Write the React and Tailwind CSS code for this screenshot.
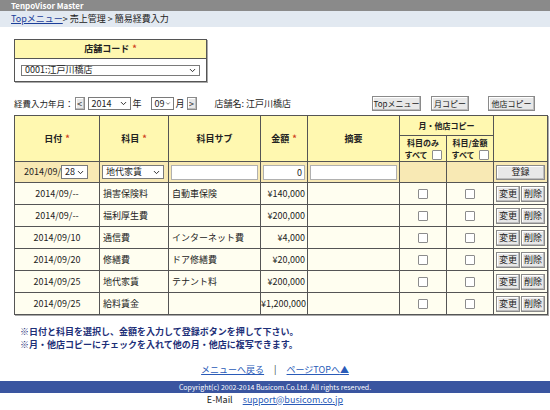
import { ChevronDown } from "lucide-react";

const rows = [
  ["2014/09/--", "損害保険料", "自動車保険", "¥140,000"],
  ["2014/09/--", "福利厚生費", "", "¥200,000"],
  ["2014/09/10", "通信費", "インターネット費", "¥4,000"],
  ["2014/09/20", "修繕費", "ドア修繕費", "¥20,000"],
  ["2014/09/25", "地代家賃", "テナント料", "¥200,000"],
  ["2014/09/25", "給料賃金", "", "¥1,200,000"],
];

function Select({ value, className }) {
  return (
    <div className={`flex items-center justify-between border border-[#7a7a7a] bg-white pl-[3px] pr-[2px] ${className}`}>
      <span>{value}</span>
      <ChevronDown size={9} strokeWidth={2.5} />
    </div>
  );
}

function Btn({ children, className }) {
  return (
    <div className={`flex items-center justify-center whitespace-nowrap border border-[#8a8a8a] bg-[#e8e8e8] shadow-[inset_-1px_-1px_0_#bdbdbd,inset_1px_1px_0_#fff] ${className}`}>
      {children}
    </div>
  );
}

function Check() {
  return <span className="inline-block w-[10px] h-[10px] border border-[#8c8c8c] bg-white rounded-[1px] align-middle" />;
}

const Req = () => <span className="text-[#d0401c] ml-[3px]">*</span>;

export default function App() {
  return (
    <div
      className="w-[550px] h-[410px] bg-white overflow-hidden text-[9px] text-[#222] whitespace-nowrap"
      style={{ fontFamily: '"Noto Sans CJK JP", "Noto Sans", sans-serif' }}
    >
      <div className="h-[11px] bg-[#8a8a8a] text-white text-[8px] leading-[11px] pl-[11px] font-bold">
        TenpoVisor Master
      </div>
      <div className="h-[16px] bg-[#e2e9f1] leading-[16px] pl-[11px]">
        <span className="text-[#1c3f9a] underline">Topメニュー</span>
        <span>&gt; 売上管理 &gt; 簡易経費入力</span>
      </div>

      {/* store code */}
      <div className="ml-[14px] mt-[12px] w-[193px] border border-[#555] shadow-[1px_1px_0_#aaa]">
        <div className="h-[19px] bg-[#fff8b0] border-b border-[#555] flex items-center justify-center font-bold">
          店舗コード<Req />
        </div>
        <div className="h-[22px] flex items-center px-[6px]">
          <Select value="0001:江戸川橋店" className="w-full h-[11px]" />
        </div>
      </div>

      {/* month row */}
      <div className="mt-[14px] h-[15px] flex items-center">
        <span className="ml-[14px] text-[8.5px]">経費入力年月：</span>
        <Btn className="ml-[1px] w-[10px] h-[13px]">&lt;</Btn>
        <Select value="2014" className="ml-[3px] w-[43px] h-[13px]" />
        <span className="ml-[2px]">年</span>
        <Select value="09" className="ml-[9px] w-[23px] h-[13px]" />
        <span className="ml-[2px]">月</span>
        <Btn className="ml-[2px] w-[10px] h-[13px]">&gt;</Btn>
        <span className="ml-[18px]">店舗名: 江戸川橋店</span>
        <Btn className="ml-auto w-[49px] h-[15px] text-[8px]">Topメニュー</Btn>
        <Btn className="ml-[10px] w-[38px] h-[15px] text-[8px]">月コピー</Btn>
        <Btn className="ml-[19px] w-[47px] h-[15px] mr-[15px] text-[8px]">他店コピー</Btn>
      </div>

      {/* table */}
      <table className="ml-[14px] mt-[4px] table-fixed border-collapse w-[533px] shadow-[1px_1px_0_#aaa]">
        <colgroup>
          <col className="w-[85px]" />
          <col className="w-[69px]" />
          <col className="w-[92px]" />
          <col className="w-[47px]" />
          <col className="w-[92px]" />
          <col className="w-[47px]" />
          <col className="w-[47px]" />
          <col className="w-[54px]" />
        </colgroup>
        <thead>
          <tr className="h-[20px] bg-[#fff8b0] font-bold">
            <th rowSpan={2} className="border border-[#555]">日付<Req /></th>
            <th rowSpan={2} className="border border-[#555]">科目<Req /></th>
            <th rowSpan={2} className="border border-[#555]">科目サブ</th>
            <th rowSpan={2} className="border border-[#555]">金額<Req /></th>
            <th rowSpan={2} className="border border-[#555]">摘要</th>
            <th colSpan={2} className="border border-[#555] text-[8px]">月・他店コピー</th>
            <th rowSpan={2} className="border border-[#555]"></th>
          </tr>
          <tr className="h-[26px] bg-[#fff8b0] font-bold text-[8px]">
            <th className="border border-[#555] leading-[12px]">
              <div>科目のみ</div>
              <div className="flex items-center justify-center gap-[4px]">すべて<Check /></div>
            </th>
            <th className="border border-[#555] leading-[12px]">
              <div>科目/金額</div>
              <div className="flex items-center justify-center gap-[4px]">すべて<Check /></div>
            </th>
          </tr>
        </thead>
        <tbody>
          <tr className="h-[21px] bg-[#f8e9b4]">
            <td className="border border-[#555]">
              <div className="flex items-center justify-end pr-[11px]">
                <span>2014/09/</span>
                <Select value="28" className="w-[27px] h-[14px]" />
              </div>
            </td>
            <td className="border border-[#555] px-[2px]">
              <Select value="地代家賃" className="w-[62px] h-[14px]" />
            </td>
            <td className="border border-[#555] px-[2px]">
              <div className="h-[15px] border border-[#b0b0b0] bg-white" />
            </td>
            <td className="border border-[#555] px-[2px]">
              <div className="h-[15px] border border-[#b0b0b0] bg-white text-right pr-[2px] leading-[13px]">0</div>
            </td>
            <td className="border border-[#555] px-[2px]">
              <div className="h-[15px] border border-[#b0b0b0] bg-white" />
            </td>
            <td className="border border-[#555]"></td>
            <td className="border border-[#555]"></td>
            <td className="border border-[#555] px-[2px]">
              <Btn className="h-[15px] w-full">登録</Btn>
            </td>
          </tr>
          {rows.map((r, i) => (
            <tr key={i} className="h-[22px] bg-[#fffef0]">
              <td className="border border-[#555] text-center">{r[0]}</td>
              <td className="border border-[#555] pl-[3px]">{r[1]}</td>
              <td className="border border-[#555] pl-[3px]">{r[2]}</td>
              <td className="border border-[#555] text-right pr-[2px]">{r[3]}</td>
              <td className="border border-[#555]"></td>
              <td className="border border-[#555] text-center"><Check /></td>
              <td className="border border-[#555] text-center"><Check /></td>
              <td className="border border-[#555] px-[2px]">
                <div className="flex gap-[1px]">
                  <Btn className="flex-1 h-[16px] bg-[#dcdcdc]">変更</Btn>
                  <Btn className="flex-1 h-[16px] bg-[#dcdcdc]">削除</Btn>
                </div>
              </td>
            </tr>
          ))}
        </tbody>
      </table>

      {/* notes */}
      <div className="mt-[10px] ml-[20px] text-[#1d2f78] font-bold leading-[13px]">
        <div>※日付と科目を選択し、金額を入力して登録ボタンを押して下さい。</div>
        <div>※月・他店コピーにチェックを入れて他の月・他店に複写できます。</div>
      </div>

      <div className="mt-[12px] flex justify-center items-center gap-[10px] text-[#2a5bb8]">
        <span className="underline">メニューへ戻る</span>
        <span className="text-[#333]">|</span>
        <span className="underline">ページTOPへ<span className="no-underline text-[#2a5bb8]">▲</span></span>
      </div>

      <div className="mt-[4px] h-[12px] bg-[#3a55a0] text-white text-[7px] leading-[12px] text-center">
        Copyright(c) 2002-2014 Busicom.Co.Ltd. All rights reserved.
      </div>
      <div className="flex justify-center gap-[10px] text-[9px] leading-[14px]">
        <span>E-Mail</span>
        <span className="text-[#2a5bb8] underline">support@busicom.co.jp</span>
      </div>
    </div>
  );
}
